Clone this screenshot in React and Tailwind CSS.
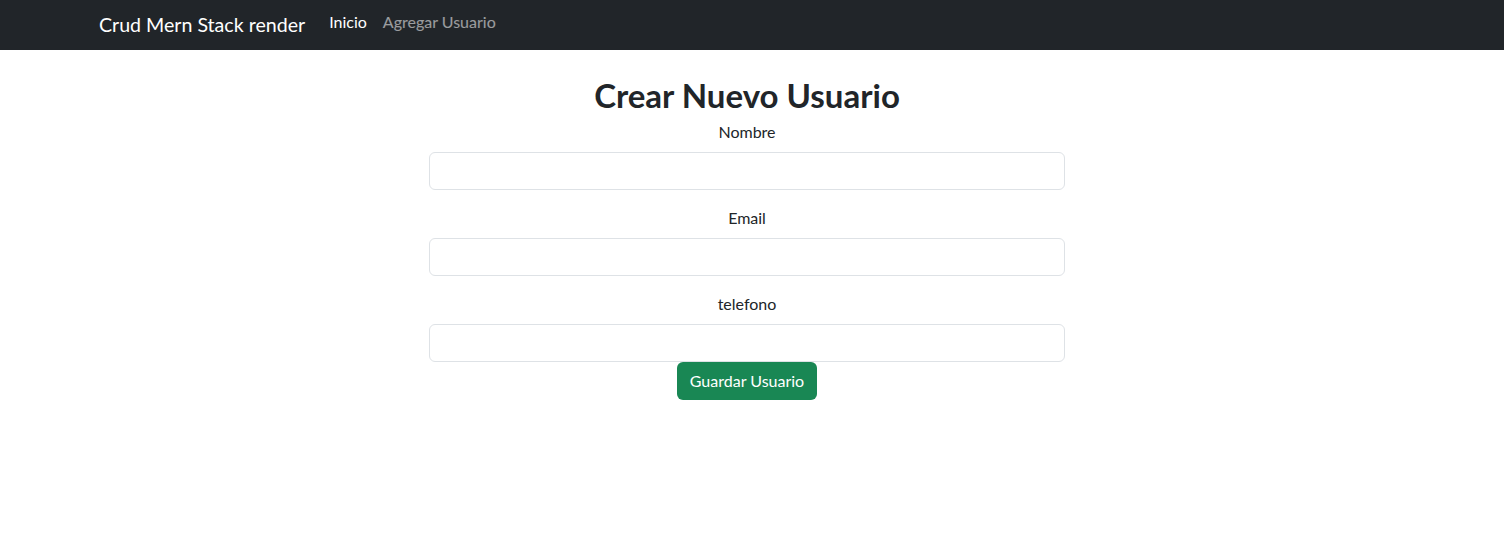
import { useState } from 'react'

const font = { fontFamily: 'Lato, "Noto Sans", sans-serif' }

function Field({ label, value, onChange }) {
  return (
    <div className="mb-4 flex flex-col items-center">
      <label className="mb-2 text-base leading-6 text-[#212529]">{label}</label>
      <input
        value={value}
        onChange={(e) => onChange(e.target.value)}
        className="h-[38px] w-full rounded-md border border-[#dee2e6] bg-white px-3 text-base text-[#212529] outline-none"
      />
    </div>
  )
}

export default function App() {
  const [nombre, setNombre] = useState('')
  const [email, setEmail] = useState('')
  const [telefono, setTelefono] = useState('')

  return (
    <div className="min-h-[535px] bg-white" style={font}>
      <nav className="h-[50px] bg-[#212529]">
        <div className="flex h-full items-center pl-[99px]">
          <a href="#" className="mr-4 text-[19.6px] text-white">
            Crud Mern Stack render
          </a>
          <a href="#" className="-mt-1.5 px-2 text-base text-white">
            Inicio
          </a>
          <a href="#" className="-mt-1.5 px-2 text-base text-white/55">
            Agregar Usuario
          </a>
        </div>
      </nav>
      <main className="w-[1494px]">
        <div className="mx-auto mt-6 w-[636px] text-center">
          <h2 className="mb-1 text-[33px] font-bold leading-[42px] text-[#212529]">Crear Nuevo Usuario</h2>
          <form onSubmit={(e) => e.preventDefault()}>
            <Field label="Nombre" value={nombre} onChange={setNombre} />
            <Field label="Email" value={email} onChange={setEmail} />
            <div className="flex flex-col items-center">
              <label className="mb-2 text-base leading-6 text-[#212529]">telefono</label>
              <input
                value={telefono}
                onChange={(e) => setTelefono(e.target.value)}
                className="h-[38px] w-full rounded-md border border-[#dee2e6] bg-white px-3 text-base text-[#212529] outline-none"
              />
              <button type="submit" className="h-[38px] rounded-md bg-[#198754] px-[13px] text-base text-white">
                Guardar Usuario
              </button>
            </div>
          </form>
        </div>
      </main>
    </div>
  )
}
